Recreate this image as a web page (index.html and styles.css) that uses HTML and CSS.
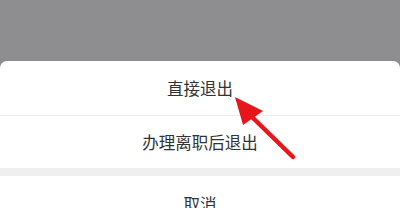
FILE: index.html
```html
<!DOCTYPE html>
<html lang="zh-CN">
<head>
<meta charset="utf-8">
<link rel="stylesheet" href="styles.css">
</head>
<body>
<div class="screen">
  <div class="mask"></div>
  <div class="sheet">
    <div class="item item-first">直接退出</div>
    <div class="item item-second">办理离职后退出</div>
    <div class="gap"></div>
    <div class="item item-cancel">取消</div>
  </div>
  <svg class="arrow" width="400" height="208" viewBox="0 0 400 208">
    <line x1="252" y1="117" x2="293" y2="157" stroke="#e8151b" stroke-width="4.5" stroke-linecap="round"/>
    <polygon points="235,97 243,125 263,111" fill="#e8151b"/>
  </svg>
</div>
</body>
</html>
```
FILE: styles.css
```css
html, body {
  margin: 0;
  padding: 0;
}
body {
  width: 400px;
  height: 208px;
  overflow: hidden;
  background: #8e8e90;
  font-family: "Noto Sans CJK SC", "Noto Sans", sans-serif;
}
.screen {
  position: relative;
  width: 400px;
  height: 208px;
  display: flex;
  flex-direction: column;
}
.mask {
  height: 61px;
  flex: none;
}
.sheet {
  flex: 1;
  background: #ffffff;
  border-radius: 7px 7px 0 0;
  display: flex;
  flex-direction: column;
}
.item {
  display: flex;
  align-items: center;
  justify-content: center;
  color: #333333;
  font-size: 16.5px;
  flex: none;
}
.item-first {
  height: 54px;
  border-bottom: 1px solid #ececec;
}
.item-second {
  height: 52px;
}
.gap {
  height: 8px;
  background: #efefef;
  flex: none;
}
.item-cancel {
  height: 52px;
  padding-top: 2px;
}
.arrow {
  position: absolute;
  left: 0;
  top: 0;
}
```
